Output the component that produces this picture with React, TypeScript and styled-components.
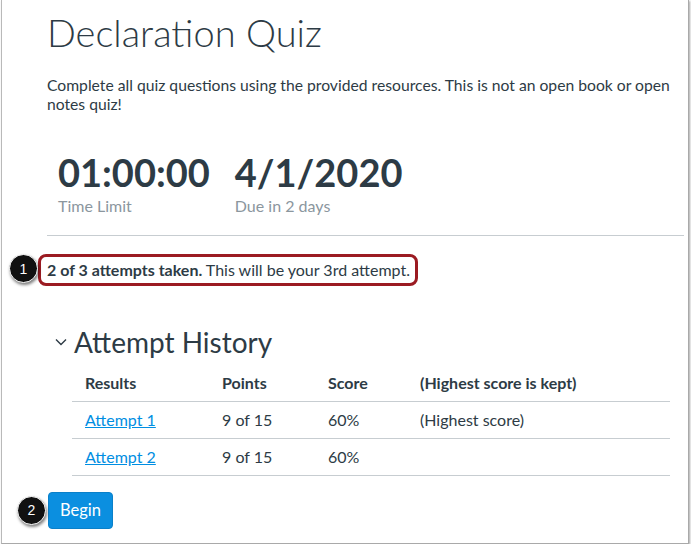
import React from "react";
import styled, { createGlobalStyle } from "styled-components";

const Global = createGlobalStyle`
  html, body { margin: 0; padding: 0; background: #ffffff; }
  body { font-family: Lato, "Open Sans", "Liberation Sans", sans-serif; color: #2d3b45; }
  * { box-sizing: border-box; }
`;

const Frame = styled.div`
  position: relative;
  margin-left: 1px;
  width: 688px;
  height: 544px;
  background: #fff;
  border-left: 1px solid #b9b9b9;
  border-right: 1px solid #a9a9a9;
  border-bottom: 1px solid #a9a9a9;
  box-shadow: 1px 1px 2px rgba(0, 0, 0, 0.35);
  padding: 8px 4px 0 45px;
`;

const Title = styled.h1`
  margin: 0;
  font-weight: 300;
  font-size: 38px;
  line-height: 48px;
  color: #2d3b45;
`;

const Description = styled.p`
  margin: 20px 0 0;
  font-size: 15.7px;
  line-height: 19px;
  width: 640px;
`;

const Stats = styled.div`
  display: flex;
  gap: 25px;
  padding: 0 0 19px 11px;
  margin-top: 36px;
  border-bottom: 1px solid #c7cdd1;
`;

const Stat = styled.div`
  display: flex;
  flex-direction: column;
`;

const StatValue = styled.span`
  font-weight: 700;
  font-size: 38px;
  line-height: 44px;
  color: #2d3b45;
`;

const StatLabel = styled.span`
  margin-top: 2px;
  font-size: 16px;
  line-height: 20px;
  color: #8b969e;
`;

const AttemptsRow = styled.div`
  position: relative;
  margin-top: 18px;
  margin-left: -9px;
  display: flex;
`;

const Highlight = styled.span`
  font-size: 16px;
  line-height: 20px;
  border: 3px solid #9b1b22;
  border-radius: 8px;
  padding: 3px 5px 3px 6px;
`;

const Badge = styled.span<{ $left: number; $top: number }>`
  position: absolute;
  left: ${(p) => p.$left}px;
  top: ${(p) => p.$top}px;
  width: 29px;
  height: 29px;
  border-radius: 50%;
  background: #111;
  border: 1.5px solid #fff;
  box-shadow: 1px 2px 3px rgba(0, 0, 0, 0.5);
  color: #fff;
  font-family: "Liberation Sans", Arial, sans-serif;
  font-size: 14px;
  display: flex;
  align-items: center;
  justify-content: center;
  z-index: 2;
`;

const HistoryHeading = styled.h2`
  margin: 38px 0 0 8px;
  display: flex;
  align-items: center;
  gap: 7px;
  font-weight: 400;
  font-size: 28px;
  line-height: 36px;
  color: #2d3b45;
`;

const Table = styled.table`
  margin: 5px 0 0 25px;
  width: 598px;
  border-collapse: collapse;
  font-size: 16px;
`;

const Th = styled.th<{ $w?: number }>`
  text-align: left;
  font-weight: 700;
  padding: 0 12px 0 13px;
  height: 36px;
  border-bottom: 1px solid #c7cdd1;
  width: ${(p) => (p.$w ? `${p.$w}px` : "auto")};
`;

const Td = styled.td`
  padding: 0 12px 0 13px;
  height: 37px;
  border-bottom: 1px solid #c7cdd1;
`;

const Link = styled.a`
  color: #008ee2;
  text-decoration: underline;
`;

const ButtonRow = styled.div`
  position: relative;
  margin-top: 16px;
  margin-left: 1px;
`;

const BeginButton = styled.button`
  font-family: Lato, "Liberation Sans", sans-serif;
  font-size: 16.5px;
  background: #0b8fe0;
  color: #fff;
  border: 1px solid #0a80c9;
  border-radius: 4px;
  width: 65px;
  height: 37px;
  padding: 0;
`;

const Chevron = () => (
  <svg width="12" height="8" viewBox="0 0 12 8" fill="none">
    <path d="M1 1.5 L6 6.5 L11 1.5" stroke="#2d3b45" strokeWidth="1.4" />
  </svg>
);

export default function App() {
  const rows = [
    { name: "Attempt 1", points: "9 of 15", score: "60%", note: "(Highest score)" },
    { name: "Attempt 2", points: "9 of 15", score: "60%", note: "" },
  ];
  return (
    <>
      <Global />
      <Frame>
        <Title>Declaration Quiz</Title>
        <Description>
          Complete all quiz questions using the provided resources. This is not an open book or open notes quiz!
        </Description>
        <Stats>
          <Stat>
            <StatValue>01:00:00</StatValue>
            <StatLabel>Time Limit</StatLabel>
          </Stat>
          <Stat>
            <StatValue>4/1/2020</StatValue>
            <StatLabel>Due in 2 days</StatLabel>
          </Stat>
        </Stats>
        <AttemptsRow>
          <Badge $left={-29} $top={0}>1</Badge>
          <Highlight>
            <b>2 of 3 attempts taken.</b> This will be your 3rd attempt.
          </Highlight>
        </AttemptsRow>
        <HistoryHeading>
          <Chevron />
          Attempt History
        </HistoryHeading>
        <Table>
          <thead>
            <tr>
              <Th $w={137}>Results</Th>
              <Th $w={106}>Points</Th>
              <Th $w={92}>Score</Th>
              <Th>(Highest score is kept)</Th>
            </tr>
          </thead>
          <tbody>
            {rows.map((r) => (
              <tr key={r.name}>
                <Td>
                  <Link href="#">{r.name}</Link>
                </Td>
                <Td>{r.points}</Td>
                <Td>{r.score}</Td>
                <Td>{r.note}</Td>
              </tr>
            ))}
          </tbody>
        </Table>
        <ButtonRow>
          <Badge $left={-31} $top={4}>2</Badge>
          <BeginButton>Begin</BeginButton>
        </ButtonRow>
      </Frame>
    </>
  );
}
